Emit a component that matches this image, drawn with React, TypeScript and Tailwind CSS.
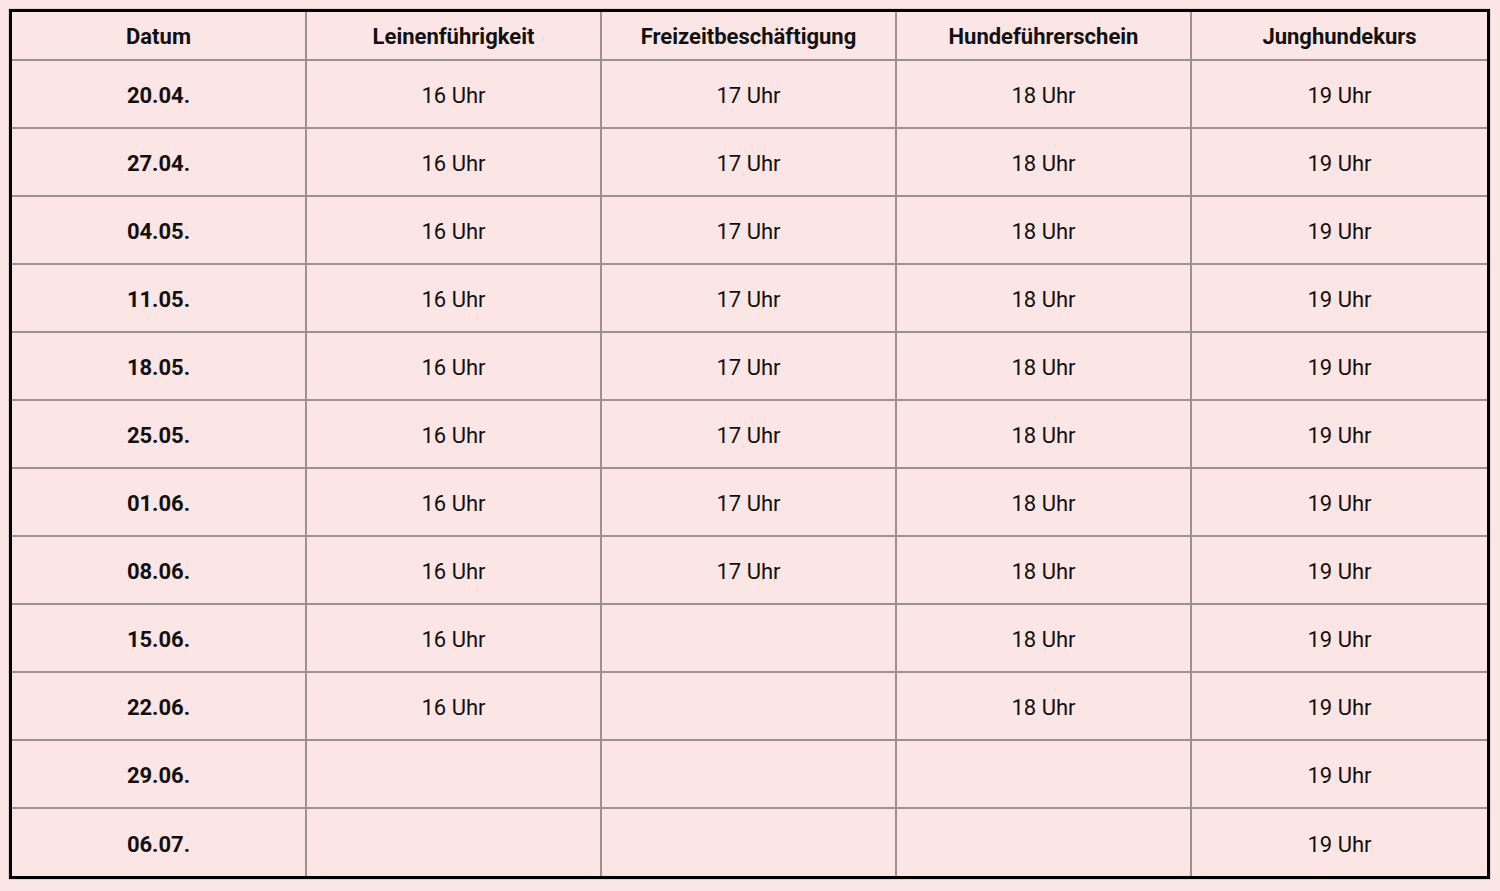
import React from "react";

const rows: [string, string, string, string, string][] = [
  ["20.04.", "16 Uhr", "17 Uhr", "18 Uhr", "19 Uhr"],
  ["27.04.", "16 Uhr", "17 Uhr", "18 Uhr", "19 Uhr"],
  ["04.05.", "16 Uhr", "17 Uhr", "18 Uhr", "19 Uhr"],
  ["11.05.", "16 Uhr", "17 Uhr", "18 Uhr", "19 Uhr"],
  ["18.05.", "16 Uhr", "17 Uhr", "18 Uhr", "19 Uhr"],
  ["25.05.", "16 Uhr", "17 Uhr", "18 Uhr", "19 Uhr"],
  ["01.06.", "16 Uhr", "17 Uhr", "18 Uhr", "19 Uhr"],
  ["08.06.", "16 Uhr", "17 Uhr", "18 Uhr", "19 Uhr"],
  ["15.06.", "16 Uhr", "", "18 Uhr", "19 Uhr"],
  ["22.06.", "16 Uhr", "", "18 Uhr", "19 Uhr"],
  ["29.06.", "", "", "", "19 Uhr"],
  ["06.07.", "", "", "", "19 Uhr"],
];

const headers = ["Datum", "Leinenführigkeit", "Freizeitbeschäftigung", "Hundeführerschein", "Junghundekurs"];

export default function App() {
  return (
    <div
      className="w-[1500px] h-[891px] bg-[#fbe6e5] pt-[8px] pl-[8px]"
      style={{ fontFamily: "Roboto, 'Noto Sans', sans-serif" }}
    >
      <div className="w-[1483px] border border-[#e0d0d0]">
        <div className="border-[3px] border-black">
          <table className="w-full border-collapse table-fixed text-[#111] text-[22px] leading-none">
            <colgroup>
              <col className="w-[294px]" />
              <col className="w-[295px]" />
              <col className="w-[295px]" />
              <col className="w-[295px]" />
              <col />
            </colgroup>
            <thead>
              <tr className="h-[48px]">
                {headers.map((h, i) => (
                  <th
                    key={i}
                    className="border-2 border-t-0 border-[#9a9292] font-bold text-center align-middle pt-[2px] first:border-l-0 last:border-r-0"
                  >
                    {h}
                  </th>
                ))}
              </tr>
            </thead>
            <tbody>
              {rows.map((r, ri) => (
                <tr key={ri} className="h-[68px]">
                  {r.map((c, ci) => (
                    <td
                      key={ci}
                      className={`border-2 border-[#9a9292] text-center align-middle pt-[4px] first:border-l-0 last:border-r-0 ${
                        ri === rows.length - 1 ? "border-b-0" : ""
                      } ${ci === 0 ? "font-bold" : "font-normal"}`}
                    >
                      {c}
                    </td>
                  ))}
                </tr>
              ))}
            </tbody>
          </table>
        </div>
      </div>
    </div>
  );
}
